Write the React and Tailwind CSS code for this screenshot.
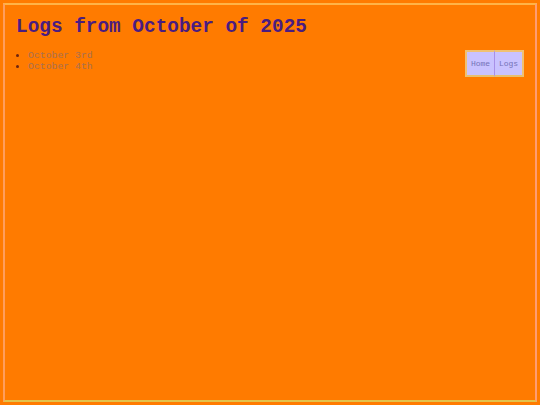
export default function App() {
  return (
    <div className="h-[405px] w-[540px] bg-[#ff7b00] p-[3px] font-['Liberation_Mono','Courier_New',monospace]">
      <div className="flex h-full flex-col border-2 border-t-[#ffb347] border-l-[#ff9d5c] border-b-[#e2c24c] border-r-[#ff9c72] px-[11px] pt-[10px]">
        <h1 className="text-[19.4px] font-bold leading-[24px] text-[#4a1c80]">
          Logs from October of 2025
        </h1>
        <div className="mt-[11px] flex items-start justify-between">
          <ul className="list-disc pl-[12px] text-[9.8px] leading-[11px] text-[#a87050] marker:text-[#6e2410]">
            <li>October 3rd</li>
            <li>October 4th</li>
          </ul>
          <nav className="flex">
            <a className="flex h-[27px] w-[30px] items-center justify-center border-2 border-r border-t-[#f0c172] border-l-[#f0c172] border-b-[#e8c070] border-r-[#a890e8] bg-[#c9c2ff] text-[8px] text-[#7472b8]">
              Home
            </a>
            <a className="flex h-[27px] w-[29px] items-center justify-center border-2 border-l-0 border-t-[#f0c172] border-b-[#e8c070] border-r-[#f0c172] bg-[#c9c2ff] text-[8px] text-[#7472b8]">
              Logs
            </a>
          </nav>
        </div>
      </div>
    </div>
  );
}
